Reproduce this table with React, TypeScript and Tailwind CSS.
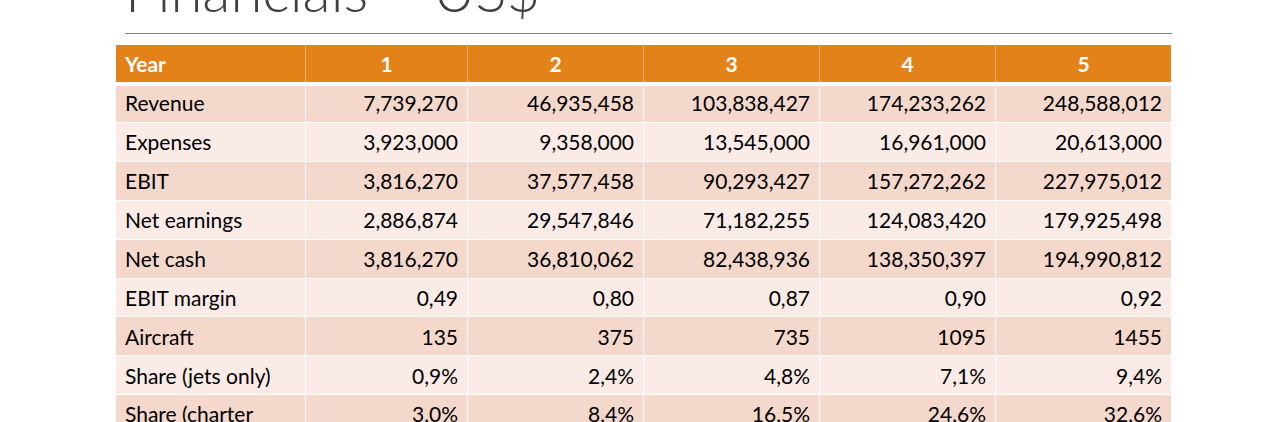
const HEAD = ["Year", "1", "2", "3", "4", "5"];

const ROWS: string[][] = [
  ["Revenue", "7,739,270", "46,935,458", "103,838,427", "174,233,262", "248,588,012"],
  ["Expenses", "3,923,000", "9,358,000", "13,545,000", "16,961,000", "20,613,000"],
  ["EBIT", "3,816,270", "37,577,458", "90,293,427", "157,272,262", "227,975,012"],
  ["Net earnings", "2,886,874", "29,547,846", "71,182,255", "124,083,420", "179,925,498"],
  ["Net cash", "3,816,270", "36,810,062", "82,438,936", "138,350,397", "194,990,812"],
  ["EBIT margin", "0,49", "0,80", "0,87", "0,90", "0,92"],
  ["Aircraft", "135", "375", "735", "1095", "1455"],
  ["Share (jets only)", "0,9%", "2,4%", "4,8%", "7,1%", "9,4%"],
  ["Share (charter only)", "3,0%", "8,4%", "16,5%", "24,6%", "32,6%"],
];

const COLS = "grid grid-cols-[189px_162px_176px_176px_176px_176px]";

export default function App() {
  return (
    <div
      className="h-[422px] w-[1280px] overflow-hidden bg-white text-black"
      style={{ fontFamily: "Lato, 'Noto Sans', sans-serif" }}
    >
      <div className="ml-[125px] w-[1047px]">
        <h1 className="-mt-[39px] whitespace-nowrap text-[58px] font-light leading-none text-[#404040]">
          Financials – US$
        </h1>
        <div className="mt-[14px] h-px bg-[#7f7f7f]" />
      </div>

      <div className="ml-[116px] mt-[11px] w-[1055px] text-[21px] leading-[25px]">
        {/* header */}
        <div className={COLS + " h-[37px] bg-[#e4821a] font-bold text-white"}>
          {HEAD.map((h, i) => (
            <div
              key={h}
              className={
                i === 0
                  ? "flex items-center pl-[9px]"
                  : "flex items-center justify-center border-l border-[#f0b27a]"
              }
            >
              {h}
            </div>
          ))}
        </div>

        <div className="mt-[4px] flex flex-col gap-px">
          {ROWS.map((r, ri) => (
            <div
              key={r[0]}
              className={
                COLS +
                " " +
                (ri % 2 === 0 ? "bg-[#f4d8cc]" : "bg-[#faebe7]") +
                " " +
                (ri === 0 ? "h-[36px]" : ri === ROWS.length - 1 ? "min-h-[38px]" : "h-[37.9px]")
              }
            >
              {r.map((c, ci) => (
                <div
                  key={ci}
                  className={
                    (ri === ROWS.length - 1
                      ? "flex items-start pt-[6px] "
                      : ri === 0
                        ? "flex items-center pb-[3px] "
                        : "flex items-center ") +
                    (ci === 0
                      ? "pl-[9px] pr-[9px]"
                      : "justify-end border-l border-white pr-[9px]")
                  }
                >
                  {c}
                </div>
              ))}
            </div>
          ))}
        </div>
      </div>
    </div>
  );
}
